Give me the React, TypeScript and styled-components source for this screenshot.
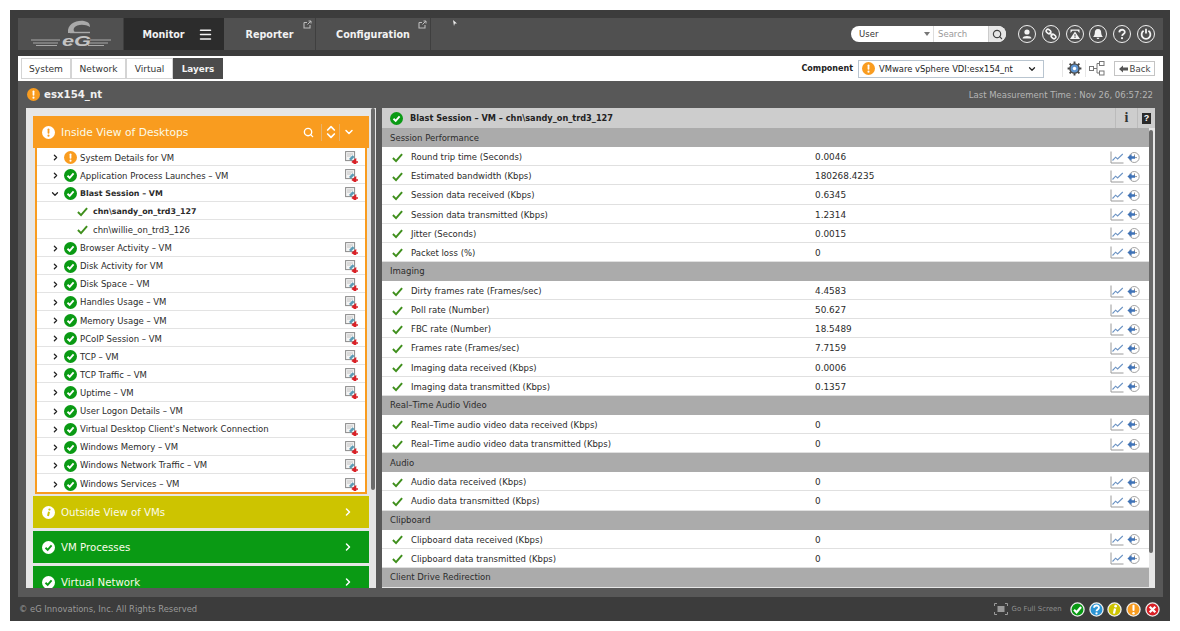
import React from "react";
import styled, { createGlobalStyle } from "styled-components";
import {
  ChevronDown,
  ChevronRight,
  ChevronsUpDown,
  Menu,
  Search,
} from "lucide-react";

const GlobalStyle = createGlobalStyle`
  html, body {
    margin: 0;
    padding: 0;
    background: #fff;
  }
  body {
    font-family: "DejaVu Sans", "Liberation Sans", sans-serif;
    font-size: 8.5px;
  }
  * {
    box-sizing: border-box;
  }
`;

const Frame = styled.div`
  width: 1160px;
  height: 611px;
  margin: 10px 0 0 10px;
  padding: 8px 7px 0 8px;
  background: #3c3c3c;
  display: flex;
  flex-direction: column;
  overflow: hidden;
`;

const TopBar = styled.div`
  position: relative;
  height: 32px;
  flex: none;
  margin-bottom: 6px;
  background: #505050;
  display: flex;
  align-items: stretch;
`;

const CursorMark = styled.svg`
  position: absolute;
  top: 2px;
  left: 435px;
`;

const LogoCell = styled.div`
  width: 106px;
  display: flex;
  align-items: center;
  justify-content: center;
  border-right: 1px solid #3f3f3f;
`;

const NavItem = styled.div<{ $active?: boolean; $width: number }>`
  position: relative;
  width: ${(p) => p.$width}px;
  padding-left: ${(p) => (p.$active ? 8 : 0)}px;
  display: flex;
  align-items: center;
  justify-content: center;
  gap: 13px;
  color: #f2f2f2;
  font-size: 9.6px;
  font-weight: bold;
  background: ${(p) => (p.$active ? "#2c2c2c" : "transparent")};
  border-right: 1px solid ${(p) => (p.$active ? "#2c2c2c" : "#3f3f3f")};
`;

const PopoutMark = styled.svg`
  position: absolute;
  top: 2px;
  right: 3px;
`;

const TopRight = styled.div`
  margin-left: auto;
  display: flex;
  align-items: center;
  padding-right: 8px;
`;

const SearchPill = styled.div`
  width: 155px;
  height: 16px;
  margin-right: 12px;
  background: #fff;
  border-radius: 8px;
  display: flex;
  align-items: center;
  overflow: hidden;
  font-size: 8.5px;
`;

const PillUser = styled.div`
  width: 83px;
  height: 100%;
  padding: 0 3px 0 8px;
  display: flex;
  align-items: center;
  justify-content: space-between;
  color: #333;
  border-right: 1px solid #ddd;
`;

const PillCaret = styled.span`
  width: 0;
  height: 0;
  border: 3px solid transparent;
  border-top: 4px solid #777;
  border-bottom: 0;
`;

const PillSearch = styled.div`
  flex: 1;
  height: 100%;
  padding-left: 4px;
  display: flex;
  align-items: center;
  color: #999;
`;

const PillButton = styled.div`
  width: 18px;
  height: 100%;
  display: flex;
  align-items: center;
  justify-content: center;
  background: #e6e6e6;
  border-left: 1px solid #ccc;
  color: #444;
`;

const RoundIcons = styled.div`
  display: flex;
  gap: 5.8px;
`;

const RoundIcon = styled.div`
  width: 18px;
  height: 18px;
  border: 1.5px solid #f0f0f0;
  border-radius: 50%;
  display: flex;
  align-items: center;
  justify-content: center;
  color: #f4f4f4;
`;

const ToolBar = styled.div`
  height: 25px;
  flex: none;
  background: #fff;
  display: flex;
  align-items: center;
  padding: 0 8px 0 3px;
`;

const Tabs = styled.div`
  display: flex;
  height: 21px;
`;

const Tab = styled.div<{ $active?: boolean; $width: number }>`
  width: ${(p) => p.$width}px;
  display: flex;
  align-items: center;
  justify-content: center;
  font-size: ${(p) => (p.$active ? 8.8 : 9.1)}px;
  color: ${(p) => (p.$active ? "#f2f2f2" : "#333")};
  font-weight: ${(p) => (p.$active ? "bold" : "normal")};
  background: ${(p) => (p.$active ? "#4b4b4b" : "#fff")};
  border: 1px solid ${(p) => (p.$active ? "#4b4b4b" : "#d4d4d4")};
`;

const ToolRight = styled.div`
  margin-left: auto;
  display: flex;
  align-items: center;
`;

const ComponentLabel = styled.div`
  font-weight: bold;
  font-size: 8px;
  color: #222;
  margin-right: 5px;
`;

const ComponentSelect = styled.div`
  width: 186px;
  height: 18px;
  padding: 0 6px 0 3px;
  border: 1px solid #b9c5d0;
  display: flex;
  align-items: center;
  gap: 4px;
  color: #222;
  font-size: 8.4px;
  margin-right: 18px;
`;

const SelectText = styled.span`
  flex: 1;
`;

const ToolGlyph = styled.div`
  width: 23px;
  height: 17px;
  display: flex;
  align-items: center;
  justify-content: center;
  border-left: 1px solid #e6e6e6;
`;

const BackButton = styled.div`
  width: 41px;
  height: 15px;
  margin-left: 6px;
  border: 1px solid #c4c4c4;
  display: flex;
  align-items: center;
  justify-content: center;
  gap: 2px;
  color: #444;
  font-size: 8.6px;
`;

const Content = styled.div`
  flex: 1;
  min-height: 0;
  background: #585858;
  padding: 0 8px 9px;
  display: flex;
  flex-direction: column;
`;

const TitleRow = styled.div`
  height: 27px;
  flex: none;
  display: flex;
  align-items: center;
  gap: 4px;
  padding-left: 1px;
`;

const TitleText = styled.div`
  color: #f0f0f0;
  font-size: 10.2px;
  font-weight: bold;
`;

const MeasureTime = styled.div`
  margin-left: auto;
  color: #b5b5b5;
  font-size: 8.5px;
  padding-right: 2px;
`;

const Panels = styled.div`
  flex: 1;
  min-height: 0;
  display: flex;
  gap: 6px;
`;

const LeftPanel = styled.div`
  width: 350px;
  flex: none;
  background: #e6e6e6;
  padding: 8px 7px 0;
  position: relative;
  overflow: hidden;
`;

const ScrollThumb = styled.div<{ $height: number; $top: number; $right: number }>`
  position: absolute;
  top: ${(p) => p.$top}px;
  right: ${(p) => p.$right}px;
  width: 4px;
  height: ${(p) => p.$height}px;
  background: #6a6a6a;
  border-radius: 2px;
`;

const Accordion = styled.div`
  width: 336px;
  display: flex;
  flex-direction: column;
`;

const AccordionHead = styled.div<{ $color: string }>`
  height: 32px;
  flex: none;
  background: ${(p) => p.$color};
  display: flex;
  align-items: center;
  gap: 6px;
  padding: 0 15px 0 9px;
  color: #fbfbe8;
`;

const HeadTitle = styled.div<{ $size: number }>`
  flex: 1;
  font-size: ${(p) => p.$size}px;
`;

const HeadTools = styled.div`
  display: flex;
  align-items: center;
  color: #fff;
  margin-right: -1px;
`;

const HeadDivider = styled.span<{ $left: number; $right: number }>`
  width: 1px;
  height: 17px;
  margin: 0 ${(p) => p.$right}px 0 ${(p) => p.$left}px;
  background: #e8b26a;
`;

const AccordionBody = styled.div`
  margin: 0 2px 2px;
  background: #fff;
  border: solid #f99c1f;
  border-width: 0 2px 2px;
`;

const TreeRow = styled.div<{ $child?: boolean; $bold?: boolean }>`
  height: 18.12px;
  display: flex;
  align-items: center;
  padding: 2px 7px 0 ${(p) => (p.$child ? 40 : 13)}px;
  border-bottom: 1px solid #e3e3e3;
  color: #2b2b2b;
  font-size: ${(p) => (p.$bold ? 7.9 : 8.5)}px;
  font-weight: ${(p) => (p.$bold ? "bold" : "normal")};
  &:last-child {
    border-bottom: 0;
  }
`;

const Caret = styled.span`
  width: 10px;
  display: flex;
  justify-content: center;
  margin-right: 4px;
  color: #222;
`;

const TreeLabel = styled.span<{ $gap: number }>`
  flex: 1;
  margin-left: ${(p) => p.$gap}px;
`;

const GapLight = styled.div`
  height: 3px;
`;

const RightPanel = styled.div`
  flex: 1;
  min-width: 0;
  background: #e6e6e6;
  padding-right: 6px;
  position: relative;
  overflow: hidden;
`;

const DetailHead = styled.div`
  height: 20px;
  margin-right: -6px;
  background: #cdcdcd;
  display: flex;
  align-items: center;
  gap: 7px;
  padding-left: 8px;
  font-size: 8.2px;
  font-weight: bold;
  color: #222;
`;

const DetailTitle = styled.div`
  flex: 1;
`;

const HeadButton = styled.div<{ $width: number }>`
  width: ${(p) => p.$width}px;
  margin-left: -7px;
  height: 100%;
  display: flex;
  align-items: center;
  justify-content: center;
  border-left: 1px solid #bbb;
  font-family: "Liberation Serif", serif;
  font-size: 14px;
  font-weight: bold;
  color: #333;
`;

const HelpBox = styled.span`
  width: 9px;
  height: 11px;
  background: #2a2a2a;
  color: #fff;
  font-size: 9px;
  font-family: "Liberation Sans", sans-serif;
  display: flex;
  align-items: center;
  justify-content: center;
`;

const GroupRow = styled.div`
  height: 19.14px;
  background: #ababab;
  display: flex;
  align-items: center;
  padding-left: 8px;
  color: #2b2b2b;
`;

const MetricRow = styled.div`
  height: 19.14px;
  padding-top: 2px;
  background: #fff;
  border-bottom: 1px solid #e0e0e0;
  display: grid;
  grid-template-columns: 29px 404px 1fr auto;
  align-items: center;
  color: #2b2b2b;
`;

const MetricValue = styled.span`
  font-size: 8.9px;
`;

const CheckCell = styled.span`
  display: flex;
  justify-content: center;
  padding-left: 1px;
`;

const MetricTools = styled.span`
  display: flex;
  align-items: center;
  gap: 3px;
  padding-right: 9px;
`;

const Footer = styled.div`
  height: 24px;
  flex: none;
  display: flex;
  align-items: center;
  padding: 0 3px 0 1px;
  color: #9a9a9a;
  font-size: 8.4px;
`;

const FullScreen = styled.div`
  margin-left: auto;
  display: flex;
  align-items: center;
  gap: 4px;
  font-size: 7px;
  color: #8f8f8f;
  margin-right: 8px;
`;

const LegendIcons = styled.div`
  display: flex;
  gap: 3.8px;
`;

type Kind = "ok" | "warn" | "info" | "help" | "error";

const kindColor: Record<Kind, string> = {
  ok: "#0a9a14",
  warn: "#f99c1f",
  info: "#cdc400",
  help: "#2b95d6",
  error: "#d92127",
};

// circle with the state glyph; inverted is the white disc used on coloured headers
const StatusIcon = ({
  kind,
  size = 13,
  inverted,
  ring,
}: {
  kind: Kind;
  size?: number;
  inverted?: boolean;
  ring?: boolean;
}) => {
  const bg = inverted ? "#fff" : kindColor[kind];
  const fg = inverted ? kindColor[kind] : "#fff";
  return (
    <svg width={size} height={size} viewBox="0 0 16 16" style={{ flex: "none" }}>
      <circle cx="8" cy="8" r={ring ? 7 : 8} fill={bg} stroke={ring ? "#eee" : "none"} strokeWidth={ring ? 1.4 : 0} />
      {kind === "ok" && (
        <path d="M4.3 8.3 L7 11 L11.8 5.4" fill="none" stroke={fg} strokeWidth="2.3" />
      )}
      {kind === "warn" && (
        <>
          <rect x="6.9" y="3" width="2.2" height="6.6" rx="1" fill={fg} />
          <circle cx="8" cy="11.9" r="1.3" fill={fg} />
        </>
      )}
      {kind === "info" && (
        <>
          <path d="M8.6 7 L7.4 12.4" stroke={fg} strokeWidth="2.4" />
          <circle cx="9.2" cy="4.4" r="1.4" fill={fg} />
        </>
      )}
      {kind === "help" && (
        <>
          <path d="M5.4 6.2 C5.6 2.9 10.8 3.1 10.6 6.1 C10.5 7.9 8 8 8 9.8" fill="none" stroke={fg} strokeWidth="2" />
          <circle cx="8" cy="12.2" r="1.2" fill={fg} />
        </>
      )}
      {kind === "error" && (
        <path d="M5 5 L11 11 M11 5 L5 11" stroke={fg} strokeWidth="2.4" />
      )}
    </svg>
  );
};

const Tick = ({ size = 11 }: { size?: number }) => (
  <svg width={size} height={size} viewBox="0 0 12 12" style={{ flex: "none" }}>
    <path d="M1 6.6 L4.4 10 L11 2.2" fill="none" stroke="#3f8f1c" strokeWidth="2.1" />
  </svg>
);

const Logo = () => (
  <svg width="82" height="28" viewBox="0 0 82 28">
    <path
      d="M38 13 C37 4 46 0 54 1 C59 2 60 4 60 7 C55 4 47 4 44 8 C43 10 44 12 46 13Z"
      fill="#a9a9a9"
    />
    <path d="M40 12.5 H60" stroke="#a9a9a9" strokeWidth="1.4" />
    <path
      d="M1 20 H30 M3 23 H28 M6 25.5 H27 M60 20 H81 M59 23 H78 M58 25.5 H74"
      stroke="#a8a8a8"
      strokeWidth="1.1"
    />
    <text
      x="32"
      y="26"
      textLength="29"
      lengthAdjust="spacingAndGlyphs"
      fontFamily="Liberation Sans, sans-serif"
      fontStyle="italic"
      fontWeight="bold"
      fontSize="14"
      fill="#c4c4c4"
    >
      eG
    </text>
  </svg>
);

const Popout = () => (
  <PopoutMark width="9" height="9" viewBox="0 0 9 9">
    <path d="M1 2.5 H4 M1 2.5 V8 H7 V5" fill="none" stroke="#bbb" strokeWidth="1.1" />
    <path d="M4.5 4.5 L8 1 M5.5 1 H8 V3.5" fill="none" stroke="#bbb" strokeWidth="1" />
  </PopoutMark>
);

const TopGlyph = ({ name }: { name: string }) => (
  <svg width="12" height="12" viewBox="0 0 12 12" fill="currentColor">
    {name === "user" && (
      <>
        <circle cx="6" cy="4" r="2.6" />
        <path d="M1.5 10.5 C1.5 7.2 10.5 7.2 10.5 10.5Z" />
      </>
    )}
    {name === "link" && (
      <g fill="none" stroke="currentColor" strokeWidth="1.6">
        <rect x="1" y="1.8" width="5" height="3.4" rx="1.7" transform="rotate(40 3.5 3.5)" />
        <rect x="6" y="6.8" width="5" height="3.4" rx="1.7" transform="rotate(40 8.5 8.5)" />
        <path d="M4.5 4.5 L7.5 7.5" />
      </g>
    )}
    {name === "alert" && (
      <>
        <path d="M1.5 1.5 H10.5 V5 L8.6 2.8 H3.4 L1.5 5Z" />
        <path d="M6 3.6 L11 11 H1Z" />
        <rect x="5.5" y="6" width="1" height="2.6" fill="#505050" />
        <rect x="5.5" y="9" width="1" height="1" fill="#505050" />
      </>
    )}
    {name === "bell" && (
      <>
        <path d="M6 1 C8.6 1 9.2 3 9.2 5 C9.2 7 10.4 8 10.8 9 H1.2 C1.6 8 2.8 7 2.8 5 C2.8 3 3.4 1 6 1Z" />
        <path d="M4.6 9.8 H7.4 C7.2 11.4 4.8 11.4 4.6 9.8Z" />
      </>
    )}
    {name === "help" && (
      <>
        <path d="M3.3 4.4 C3.4 0.9 8.8 0.9 8.8 4.2 C8.8 6 6.2 6 6.1 7.9" fill="none" stroke="currentColor" strokeWidth="1.8" />
        <circle cx="6" cy="10.2" r="1.1" />
      </>
    )}
    {name === "power" && (
      <g fill="none" stroke="currentColor" strokeWidth="1.8">
        <path d="M3.6 2.8 A4.4 4.4 0 1 0 8.4 2.8" />
        <path d="M6 0.8 V5.6" />
      </g>
    )}
  </svg>
);

const ReportIcon = () => (
  <svg width="13" height="13" viewBox="0 0 13 13" style={{ flex: "none" }}>
    <rect x="0.6" y="0.6" width="9" height="9" fill="#f4f4f4" stroke="#8a8a8a" />
    <path d="M2 3 H8 M2 5 H6" stroke="#b5b5b5" strokeWidth="0.8" />
    <path d="M4 8 L7.5 4.2 L9.5 6 L6 9.4Z" fill="#5a9bb5" />
    <path d="M7.5 11 H13 M10.6 8.4 L7.5 11 L10.6 13Z" fill="#d92127" stroke="#d92127" strokeWidth="1.4" />
  </svg>
);

const ChartIcon = () => (
  <svg width="14" height="13" viewBox="0 0 14 13">
    <path d="M1 0.5 V12 H13.5" fill="none" stroke="#9a9a9a" strokeWidth="1" />
    <path d="M2.5 9.5 L5.6 6.2 L7.6 8 L12.8 3" fill="none" stroke="#6d94c4" strokeWidth="1.1" />
  </svg>
);

const HistoryIcon = () => (
  <svg width="13" height="13" viewBox="0 0 13 13">
    <circle cx="7.2" cy="6.5" r="5" fill="#fff" stroke="#a2a2a2" />
    <path d="M7.5 3.5 V6.6 H10" fill="none" stroke="#8a8a8a" strokeWidth="0.9" />
    <path d="M0.4 6.5 L4.6 3 V5.3 H8 V7.7 H4.6 V10Z" fill="#3f73b8" />
  </svg>
);

const treeRows: { label: string; kind: Kind; report: boolean }[] = [
  { label: "Browser Activity – VM", kind: "ok", report: true },
  { label: "Disk Activity for VM", kind: "ok", report: true },
  { label: "Disk Space – VM", kind: "ok", report: true },
  { label: "Handles Usage – VM", kind: "ok", report: true },
  { label: "Memory Usage – VM", kind: "ok", report: true },
  { label: "PCoIP Session – VM", kind: "ok", report: true },
  { label: "TCP – VM", kind: "ok", report: true },
  { label: "TCP Traffic – VM", kind: "ok", report: true },
  { label: "Uptime – VM", kind: "ok", report: true },
  { label: "User Logon Details – VM", kind: "ok", report: false },
  { label: "Virtual Desktop Client's Network Connection", kind: "ok", report: true },
  { label: "Windows Memory – VM", kind: "ok", report: true },
  { label: "Windows Network Traffic – VM", kind: "ok", report: true },
  { label: "Windows Services – VM", kind: "ok", report: true },
];

const metricGroups: { title: string; rows: [string, string][] }[] = [
  {
    title: "Session Performance",
    rows: [
      ["Round trip time (Seconds)", "0.0046"],
      ["Estimated bandwidth (Kbps)", "180268.4235"],
      ["Session data received (Kbps)", "0.6345"],
      ["Session data transmitted (Kbps)", "1.2314"],
      ["Jitter (Seconds)", "0.0015"],
      ["Packet loss (%)", "0"],
    ],
  },
  {
    title: "Imaging",
    rows: [
      ["Dirty frames rate (Frames/sec)", "4.4583"],
      ["Poll rate (Number)", "50.627"],
      ["FBC rate (Number)", "18.5489"],
      ["Frames rate (Frames/sec)", "7.7159"],
      ["Imaging data received (Kbps)", "0.0006"],
      ["Imaging data transmitted (Kbps)", "0.1357"],
    ],
  },
  {
    title: "Real–Time Audio Video",
    rows: [
      ["Real–Time audio video data received (Kbps)", "0"],
      ["Real–Time audio video data transmitted (Kbps)", "0"],
    ],
  },
  {
    title: "Audio",
    rows: [
      ["Audio data received (Kbps)", "0"],
      ["Audio data transmitted (Kbps)", "0"],
    ],
  },
  {
    title: "Clipboard",
    rows: [
      ["Clipboard data received (Kbps)", "0"],
      ["Clipboard data transmitted (Kbps)", "0"],
    ],
  },
  { title: "Client Drive Redirection", rows: [] },
];

const App: React.FC = () => {
  return (
    <>
      <GlobalStyle />
      <Frame>
        <TopBar>
          <LogoCell>
            <Logo />
          </LogoCell>
          <NavItem $active $width={100}>
            Monitor
            <Menu size={15} strokeWidth={2.4} />
          </NavItem>
          <NavItem $width={92}>
            Reporter
            <Popout />
          </NavItem>
          <NavItem $width={115}>
            Configuration
            <Popout />
          </NavItem>
          <CursorMark width="4" height="6" viewBox="0 0 4 6">
            <path d="M0 0 L4 3.4 L1.8 3.6 L1 6Z" fill="#eee" />
          </CursorMark>
          <TopRight>
            <SearchPill>
              <PillUser>
                User
                <PillCaret />
              </PillUser>
              <PillSearch>Search</PillSearch>
              <PillButton>
                <Search size={11} strokeWidth={2.6} />
              </PillButton>
            </SearchPill>
            <RoundIcons>
              {["user", "link", "alert", "bell", "help", "power"].map((name) => (
                <RoundIcon key={name}>
                  <TopGlyph name={name} />
                </RoundIcon>
              ))}
            </RoundIcons>
          </TopRight>
        </TopBar>

        <ToolBar>
          <Tabs>
            <Tab $width={50}>System</Tab>
            <Tab $width={55}>Network</Tab>
            <Tab $width={47}>Virtual</Tab>
            <Tab $active $width={50}>
              Layers
            </Tab>
          </Tabs>
          <ToolRight>
            <ComponentLabel>Component</ComponentLabel>
            <ComponentSelect>
              <StatusIcon kind="warn" />
              <SelectText>VMware vSphere VDI:esx154_nt</SelectText>
              <ChevronDown size={10} strokeWidth={3} />
            </ComponentSelect>
            <ToolGlyph>
              <svg width="15" height="15" viewBox="0 0 15 15">
                <circle cx="7.5" cy="7.5" r="4.6" fill="#5f95d0" stroke="#444" strokeWidth="1.4" />
                <circle cx="7.5" cy="7.5" r="1.7" fill="#fff" />
                <path
                  d="M7.5 0.6 V2.8 M7.5 12.2 V14.4 M0.6 7.5 H2.8 M12.2 7.5 H14.4 M2.6 2.6 L4.2 4.2 M10.8 10.8 L12.4 12.4 M12.4 2.6 L10.8 4.2 M4.2 10.8 L2.6 12.4"
                  stroke="#444"
                  strokeWidth="1.9"
                />
              </svg>
            </ToolGlyph>
            <ToolGlyph>
              <svg width="16" height="15" viewBox="0 0 16 15" fill="#fff" stroke="#777">
                <rect x="0.5" y="5.5" width="4" height="4" />
                <rect x="10.5" y="0.5" width="4.5" height="4" />
                <rect x="10.5" y="10" width="4.5" height="4" />
                <path d="M4.5 7.5 H8 V2.5 H10.5 M8 7.5 V12 H10.5" fill="none" />
              </svg>
            </ToolGlyph>
            <BackButton>
              <svg width="9" height="8" viewBox="0 0 9 8">
                <path d="M0 4 L4 0.5 V2.6 H9 V5.6 H4 V7.5Z" fill="#555" />
              </svg>
              Back
            </BackButton>
          </ToolRight>
        </ToolBar>

        <Content>
          <TitleRow>
            <StatusIcon kind="warn" size={13} />
            <TitleText>esx154_nt</TitleText>
            <MeasureTime>Last Measurement Time : Nov 26, 06:57:22</MeasureTime>
          </TitleRow>
          <Panels>
            <LeftPanel>
              <ScrollThumb $top={0} $right={1} $height={382} />
              <Accordion>
                <AccordionHead $color="#f99c1f">
                  <StatusIcon kind="warn" size={13} inverted />
                  <HeadTitle $size={10.7}>Inside View of Desktops</HeadTitle>
                  <HeadTools>
                    <Search size={11} strokeWidth={3} />
                    <HeadDivider $left={7} $right={1} />
                    <ChevronsUpDown size={16} strokeWidth={2.6} />
                    <HeadDivider $left={0} $right={3} />
                    <ChevronDown size={12} strokeWidth={3} />
                  </HeadTools>
                </AccordionHead>
                <AccordionBody>
                  <TreeRow>
                    <Caret>
                      <ChevronRight size={9} strokeWidth={3.4} />
                    </Caret>
                    <StatusIcon kind="warn" />
                    <TreeLabel $gap={3}>System Details for VM</TreeLabel>
                    <ReportIcon />
                  </TreeRow>
                  <TreeRow>
                    <Caret>
                      <ChevronRight size={9} strokeWidth={3.4} />
                    </Caret>
                    <StatusIcon kind="ok" />
                    <TreeLabel $gap={3}>Application Process Launches – VM</TreeLabel>
                    <ReportIcon />
                  </TreeRow>
                  <TreeRow $bold>
                    <Caret>
                      <ChevronDown size={10} strokeWidth={3} />
                    </Caret>
                    <StatusIcon kind="ok" />
                    <TreeLabel $gap={3}>Blast Session – VM</TreeLabel>
                    <ReportIcon />
                  </TreeRow>
                  <TreeRow $child $bold>
                    <Tick />
                    <TreeLabel $gap={5}>chn\sandy_on_trd3_127</TreeLabel>
                  </TreeRow>
                  <TreeRow $child>
                    <Tick />
                    <TreeLabel $gap={5}>chn\willie_on_trd3_126</TreeLabel>
                  </TreeRow>
                  {treeRows.map((row) => (
                    <TreeRow key={row.label}>
                      <Caret>
                        <ChevronRight size={9} strokeWidth={3.4} />
                      </Caret>
                      <StatusIcon kind={row.kind} />
                      <TreeLabel $gap={3}>{row.label}</TreeLabel>
                      {row.report && <ReportIcon />}
                    </TreeRow>
                  ))}
                </AccordionBody>
                <AccordionHead $color="#cdc400">
                  <StatusIcon kind="info" size={13} inverted />
                  <HeadTitle $size={10.2}>Outside View of VMs</HeadTitle>
                  <ChevronRight size={12} strokeWidth={3} color="#fff" />
                </AccordionHead>
                <GapLight />
                <AccordionHead $color="#0a9a14">
                  <StatusIcon kind="ok" size={13} inverted />
                  <HeadTitle $size={10.2}>VM Processes</HeadTitle>
                  <ChevronRight size={12} strokeWidth={3} color="#fff" />
                </AccordionHead>
                <GapLight />
                <AccordionHead $color="#0a9a14">
                  <StatusIcon kind="ok" size={13} inverted />
                  <HeadTitle $size={10.2}>Virtual Network</HeadTitle>
                  <ChevronRight size={12} strokeWidth={3} color="#fff" />
                </AccordionHead>
              </Accordion>
            </LeftPanel>

            <RightPanel>
              <ScrollThumb $top={22} $right={2} $height={423} />
              <DetailHead>
                <StatusIcon kind="ok" size={13} />
                <DetailTitle>Blast Session – VM – chn\sandy_on_trd3_127</DetailTitle>
                <HeadButton $width={22}>i</HeadButton>
                <HeadButton $width={18}>
                  <HelpBox>?</HelpBox>
                </HeadButton>
              </DetailHead>
              {metricGroups.map((group) => (
                <React.Fragment key={group.title}>
                  <GroupRow>{group.title}</GroupRow>
                  {group.rows.map(([label, value]) => (
                    <MetricRow key={label}>
                      <CheckCell>
                        <Tick />
                      </CheckCell>
                      <span>{label}</span>
                      <MetricValue>{value}</MetricValue>
                      <MetricTools>
                        <ChartIcon />
                        <HistoryIcon />
                      </MetricTools>
                    </MetricRow>
                  ))}
                </React.Fragment>
              ))}
            </RightPanel>
          </Panels>
        </Content>

        <Footer>
          © eG Innovations, Inc. All Rights Reserved
          <FullScreen>
            <svg width="14" height="12" viewBox="0 0 14 12" fill="none" stroke="#9a9a9a">
              <path d="M0.5 3 V0.5 H3 M11 0.5 H13.5 V3 M13.5 9 V11.5 H11 M3 11.5 H0.5 V9" />
              <rect x="3.5" y="3" width="7" height="6" fill="#9a9a9a" stroke="none" />
            </svg>
            Go Full Screen
          </FullScreen>
          <LegendIcons>
            <StatusIcon kind="ok" size={15} ring />
            <StatusIcon kind="help" size={15} ring />
            <StatusIcon kind="info" size={15} ring />
            <StatusIcon kind="warn" size={15} ring />
            <StatusIcon kind="error" size={15} ring />
          </LegendIcons>
        </Footer>
      </Frame>
    </>
  );
};

export default App;
